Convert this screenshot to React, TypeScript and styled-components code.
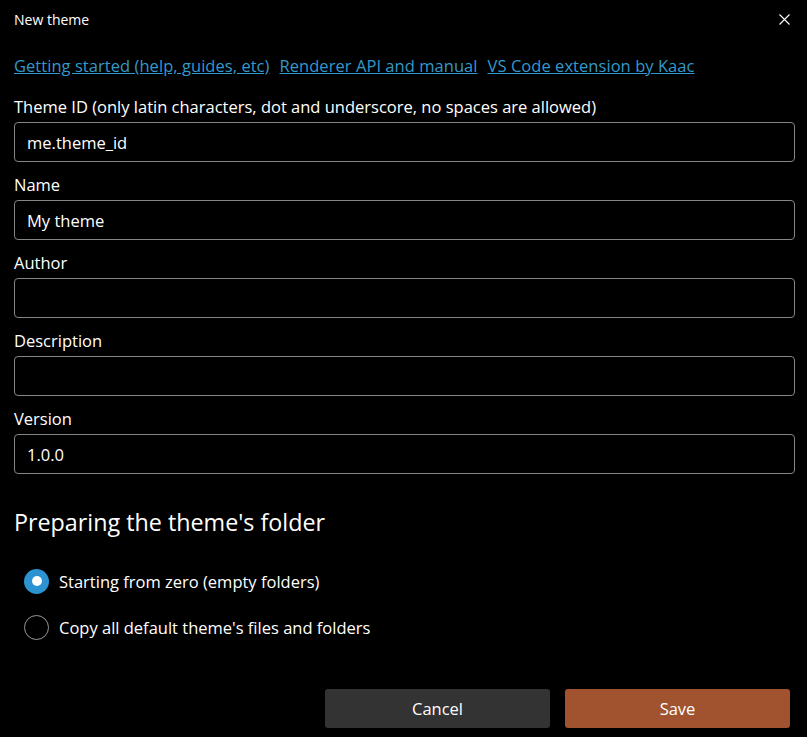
import React from "react";
import styled, { createGlobalStyle } from "styled-components";

const Global = createGlobalStyle`
  html, body { margin: 0; padding: 0; background: #000; }
  body { font-family: "Open Sans", "Noto Sans", sans-serif; color: #fff; }
  * { box-sizing: border-box; }
`;

const Dialog = styled.div`
  width: 807px;
  height: 737px;
  background: #000;
  display: flex;
  flex-direction: column;
  padding: 0 17px 9px 14px;
`;

const TitleBar = styled.div`
  height: 39px;
  display: flex;
  align-items: center;
  justify-content: space-between;
  margin-right: -17px;
`;

const Title = styled.div`
  font-size: 14px;
  color: #fff;
`;

const CloseButton = styled.button`
  width: 46px;
  height: 39px;
  background: transparent;
  border: none;
  display: flex;
  align-items: center;
  justify-content: center;
  padding: 0;
  cursor: pointer;
`;

const Links = styled.div`
  display: flex;
  gap: 10px;
  margin-top: 13px;
  height: 26px;
  align-items: center;
`;

const Link = styled.a`
  color: #3399cc;
  text-decoration: underline;
  font-size: 16.5px;
  letter-spacing: 0.05px;
`;

const Fields = styled.div`
  display: flex;
  flex-direction: column;
  margin-top: 14px;
`;

const Field = styled.div`
  display: flex;
  flex-direction: column;
  margin-bottom: 8px;
`;

const Label = styled.div`
  font-size: 16.5px;
  height: 30px;
  line-height: 30px;
`;

const Input = styled.input`
  width: 781px;
  height: 40px;
  background: #000;
  border: 1px solid #858585;
  border-radius: 4px;
  color: #fff;
  font-family: inherit;
  font-size: 16.5px;
  padding: 0 12px;
  outline: none;
`;

const Heading = styled.div`
  font-size: 23.3px;
  margin-top: 20px;
  height: 40px;
  line-height: 40px;
`;

const RadioGroup = styled.div`
  display: flex;
  flex-direction: column;
  margin-top: 26px;
  padding-left: 10px;
  gap: 20px;
`;

const RadioRow = styled.label`
  display: flex;
  align-items: center;
  gap: 10px;
  height: 26px;
  font-size: 16.5px;
`;

const RadioCircle = styled.span<{ $checked?: boolean }>`
  width: 25px;
  height: 25px;
  border-radius: 50%;
  flex: none;
  display: flex;
  align-items: center;
  justify-content: center;
  background: ${(p) => (p.$checked ? "#2b93d1" : "transparent")};
  border: ${(p) => (p.$checked ? "none" : "1.5px solid #999")};
  &::after {
    content: "";
    display: ${(p) => (p.$checked ? "block" : "none")};
    width: 10px;
    height: 10px;
    border-radius: 50%;
    background: #fff;
  }
`;

const Footer = styled.div`
  margin-top: auto;
  display: flex;
  justify-content: flex-end;
  gap: 15px;
`;

const Button = styled.button<{ $primary?: boolean }>`
  width: 225px;
  height: 39px;
  border: none;
  border-radius: 3px;
  background: ${(p) => (p.$primary ? "#a0532e" : "#333333")};
  color: #fff;
  font-family: inherit;
  font-size: 16.5px;
`;

const fields = [
  { label: "Theme ID (only latin characters, dot and underscore, no spaces are allowed)", value: "me.theme_id" },
  { label: "Name", value: "My theme" },
  { label: "Author", value: "" },
  { label: "Description", value: "" },
  { label: "Version", value: "1.0.0" },
];

export default function App() {
  return (
    <>
      <Global />
      <Dialog>
        <TitleBar>
          <Title>New theme</Title>
          <CloseButton aria-label="Close">
            <svg width="11" height="11" viewBox="0 0 11 11">
              <path d="M0.5 0.5 L10.5 10.5 M10.5 0.5 L0.5 10.5" stroke="#fff" strokeWidth="1.1" />
            </svg>
          </CloseButton>
        </TitleBar>
        <Links>
          <Link>Getting started (help, guides, etc)</Link>
          <Link>Renderer API and manual</Link>
          <Link>VS Code extension by Kaac</Link>
        </Links>
        <Fields>
          {fields.map((f) => (
            <Field key={f.label}>
              <Label>{f.label}</Label>
              <Input defaultValue={f.value} />
            </Field>
          ))}
        </Fields>
        <Heading>Preparing the theme's folder</Heading>
        <RadioGroup>
          <RadioRow>
            <RadioCircle $checked />
            Starting from zero (empty folders)
          </RadioRow>
          <RadioRow>
            <RadioCircle />
            Copy all default theme's files and folders
          </RadioRow>
        </RadioGroup>
        <Footer>
          <Button>Cancel</Button>
          <Button $primary>Save</Button>
        </Footer>
      </Dialog>
    </>
  );
}
